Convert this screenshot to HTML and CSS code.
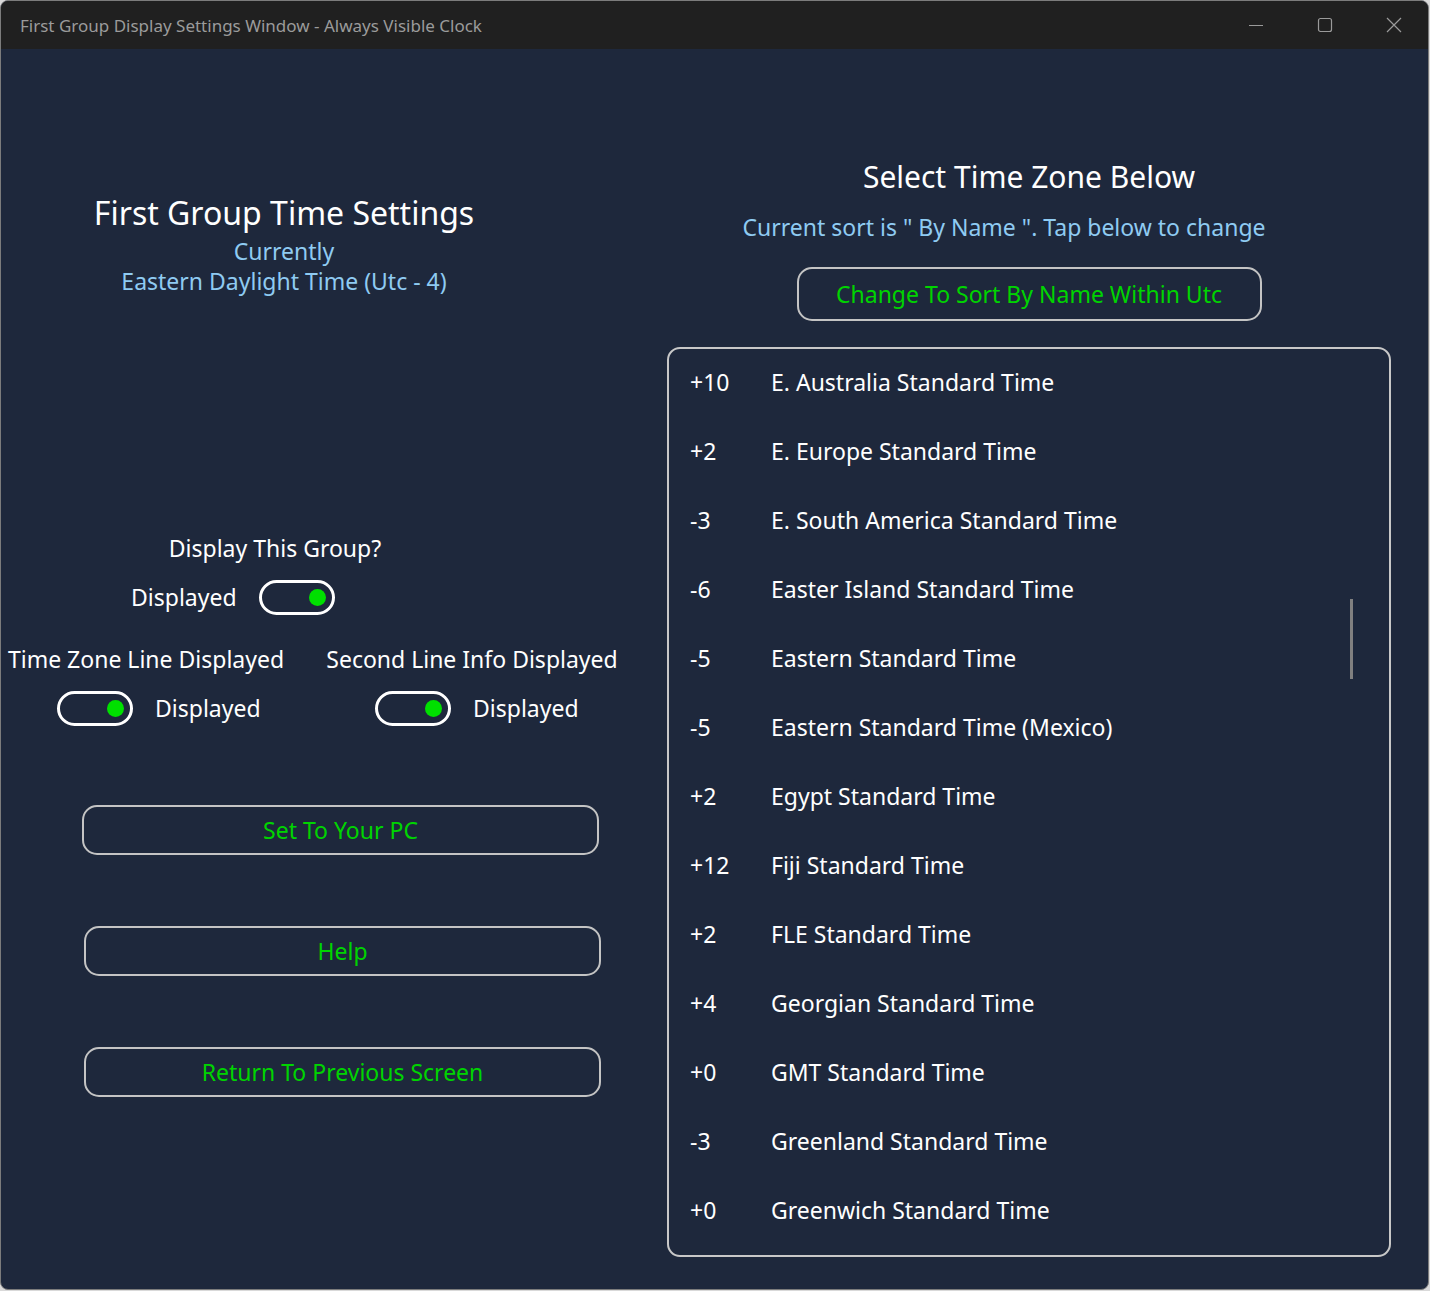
FILE: index.html
```html
<!DOCTYPE html>
<html lang="en">
<head>
    <meta charset="UTF-8">
    <meta name="viewport" content="width=device-width, initial-scale=1.0">
    <title>First Group Display Settings Window - Always Visible Clock</title>
<link rel="stylesheet" href="styles.css">
</head>
<body>
    <div class="app_window">
        <header class="title_bar">
            <span class="title_text">First Group Display Settings Window - Always Visible Clock</span>
            <ul class="win_btns">
                <li>
                    <svg width="16" height="16" viewBox="0 0 16 16"><path d="M1 8.5h14" stroke="#9a9a9a" stroke-width="1.2" fill="none"/></svg>
                </li>
                <li>
                    <svg width="16" height="16" viewBox="0 0 16 16"><rect x="1.5" y="1.5" width="13" height="13" rx="2" stroke="#9a9a9a" stroke-width="1.2" fill="none"/></svg>
                </li>
                <li>
                    <svg width="16" height="16" viewBox="0 0 16 16"><path d="M1 1l14 14M15 1L1 15" stroke="#9a9a9a" stroke-width="1.2" fill="none"/></svg>
                </li>
            </ul>
        </header>

        <div class="content_grid">
            <section class="left_area">
                <div class="group_head">
                    <h1 class="group_title">First Group Time Settings</h1>
                    <p class="info_text">Currently</p>
                    <p class="info_text">Eastern Daylight Time (Utc - 4)</p>
                </div>

                <div class="display_group">
                    <p class="label_text">Display This Group?</p>
                    <div class="switch_row first_switch">
                        <span class="label_text">Displayed</span>
                        <span class="switch"><span class="switch_dot"></span></span>
                    </div>
                </div>

                <div class="line_grid">
                    <p class="label_text">Time Zone Line Displayed</p>
                    <p class="label_text">Second Line Info Displayed</p>
                    <div class="switch_row zone_switch">
                        <span class="switch"><span class="switch_dot"></span></span>
                        <span class="label_text">Displayed</span>
                    </div>
                    <div class="switch_row second_switch">
                        <span class="switch"><span class="switch_dot"></span></span>
                        <span class="label_text">Displayed</span>
                    </div>
                </div>

                <div class="btn_list">
                    <button class="green_btn btn_pc">Set To Your PC</button>
                    <button class="green_btn">Help</button>
                    <button class="green_btn">Return To Previous Screen</button>
                </div>
            </section>

            <section class="right_area">
                <h2 class="select_title">Select Time Zone Below</h2>
                <p class="info_text sort_text">Current sort is " By Name ". Tap below to change</p>
                <button class="green_btn sort_btn">Change To Sort By Name Within Utc</button>

                <div class="zone_box">
                    <ul class="zone_list">
                        <li><span class="zone_off">+10</span><span>E. Australia Standard Time</span></li>
                        <li><span class="zone_off">+2</span><span>E. Europe Standard Time</span></li>
                        <li><span class="zone_off">-3</span><span>E. South America Standard Time</span></li>
                        <li><span class="zone_off">-6</span><span>Easter Island Standard Time</span></li>
                        <li><span class="zone_off">-5</span><span>Eastern Standard Time</span></li>
                        <li><span class="zone_off">-5</span><span>Eastern Standard Time (Mexico)</span></li>
                        <li><span class="zone_off">+2</span><span>Egypt Standard Time</span></li>
                        <li><span class="zone_off">+12</span><span>Fiji Standard Time</span></li>
                        <li><span class="zone_off">+2</span><span>FLE Standard Time</span></li>
                        <li><span class="zone_off">+4</span><span>Georgian Standard Time</span></li>
                        <li><span class="zone_off">+0</span><span>GMT Standard Time</span></li>
                        <li><span class="zone_off">-3</span><span>Greenland Standard Time</span></li>
                        <li><span class="zone_off">+0</span><span>Greenwich Standard Time</span></li>
                    </ul>
                    <div class="scroll_thumb"></div>
                </div>
            </section>
        </div>
    </div>
</body>
</html>
```

FILE: styles.css
```css
*{
    margin:0;
    padding:0;
    box-sizing: border-box;
}
body{
    background-color: #d9d9d9;
    font-family: "Noto Sans", "Open Sans", sans-serif;
    color: #ffffff;
}
.app_window{
    width: 1429px;
    height: 1290px;
    border: 1px solid #7c7c7c;
    border-radius: 8px;
    overflow: hidden;
    background-color: #1e283c;
    display: flex;
    flex-direction: column;
}
.title_bar{
    height: 48px;
    background-color: #202020;
    display: flex;
    flex-direction: row;
    align-items: center;
    justify-content: space-between;
    padding-left: 19px;
}
.title_text{
    font-size: 17px;
    color: #9b9b9b;
}
.win_btns{
    display: flex;
    flex-direction: row;
    list-style: none;
}
.win_btns li{
    width: 69px;
    height: 48px;
    display: flex;
    align-items: center;
    justify-content: center;
}
.content_grid{
    flex: 1;
    display: grid;
    grid-template-columns: 666px 1fr;
}
.left_area{
    display: flex;
    flex-direction: column;
}
.group_head{
    width: 566px;
    padding-top: 144px;
    text-align: center;
}
.group_title{
    font-size: 32px;
    font-weight: normal;
    line-height: 40px;
    margin-bottom: 3px;
}
.info_text{
    font-size: 23px;
    line-height: 30px;
    color: #8fcbf2;
}
.label_text{
    font-size: 23px;
    line-height: 30px;
    color: #ffffff;
}
.display_group{
    width: 548px;
    margin-top: 237px;
    text-align: center;
}
.switch_row{
    display: flex;
    flex-direction: row;
    align-items: center;
    justify-content: flex-start;
    gap: 22px;
    height: 36px;
}
.first_switch{
    padding-left: 130px;
    margin-top: 16px;
}
.zone_switch{
    padding-left: 56px;
}
.second_switch{
    padding-left: 84px;
}
.switch{
    width: 76px;
    height: 35px;
    border: 3px solid #ffffff;
    border-radius: 18px;
    display: flex;
    align-items: center;
    justify-content: flex-end;
    padding-right: 6px;
}
.switch_dot{
    width: 17px;
    height: 17px;
    border-radius: 50%;
    background-color: #00e000;
}
.line_grid{
    display: grid;
    grid-template-columns: 290px 362px;
    row-gap: 16px;
    margin-top: 29px;
    text-align: center;
}
.btn_list{
    display: flex;
    flex-direction: column;
    gap: 71px;
    margin-top: 79px;
    padding-left: 83px;
}
.green_btn{
    width: 517px;
    height: 50px;
    border: 2px solid #c4c4c4;
    border-radius: 15px;
    background-color: transparent;
    color: #00d400;
    font-family: "Noto Sans", "Open Sans", sans-serif;
    font-size: 23px;
}
.btn_pc{
    margin-left: -2px;
}
.right_area{
    display: flex;
    flex-direction: column;
    align-items: center;
    width: 724px;
}
.select_title{
    font-size: 30px;
    font-weight: normal;
    line-height: 36px;
    margin-top: 110px;
}
.sort_text{
    margin-top: 17px;
    margin-right: 50px;
}
.sort_btn{
    width: 465px;
    height: 54px;
    margin-top: 25px;
}
.zone_box{
    position: relative;
    width: 724px;
    height: 910px;
    margin-top: 26px;
    border: 2px solid #c8c8c8;
    border-radius: 13px;
    overflow: hidden;
}
.zone_list{
    list-style: none;
    padding-left: 21px;
}
.zone_list li{
    display: flex;
    flex-direction: row;
    align-items: center;
    height: 69px;
    padding-bottom: 3px;
    font-size: 23px;
}
.zone_off{
    width: 81px;
}
.scroll_thumb{
    position: absolute;
    right: 36px;
    top: 250px;
    width: 3px;
    height: 80px;
    background-color: #808080;
}
```
